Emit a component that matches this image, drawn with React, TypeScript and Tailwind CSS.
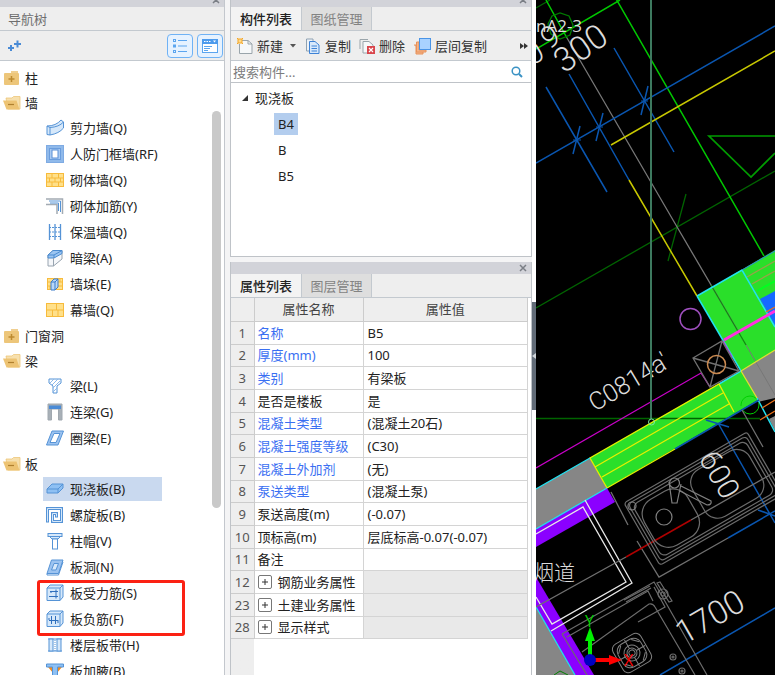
import type { ReactNode } from 'react';

type IconName =
  | 'shearWall' | 'frameWall' | 'brick' | 'brickBar' | 'insulation' | 'hiddenBeam' | 'pier' | 'curtain'
  | 'beam' | 'linkBeam' | 'ringBeam' | 'slab' | 'spiral' | 'cap' | 'hole' | 'forceBar' | 'negBar' | 'strip' | 'haunch';

interface TreeItem {
  icon: IconName;
  label: string;
  active?: boolean;
}

interface TreeGroup {
  label: string;
  open: boolean;
  items: TreeItem[];
}

const slabItems: TreeItem[] = [
  { icon: 'slab', label: '现浇板(B)', active: true },
  { icon: 'spiral', label: '螺旋板(B)' },
  { icon: 'cap', label: '柱帽(V)' },
  { icon: 'hole', label: '板洞(N)' },
];

const slabBars: TreeItem[] = [
  { icon: 'forceBar', label: '板受力筋(S)' },
  { icon: 'negBar', label: '板负筋(F)' },
];

const slabRest: TreeItem[] = [
  { icon: 'strip', label: '楼层板带(H)' },
  { icon: 'haunch', label: '板加腋(B)' },
];

const groups: TreeGroup[] = [
  { label: '柱', open: false, items: [] },
  {
    label: '墙',
    open: true,
    items: [
      { icon: 'shearWall', label: '剪力墙(Q)' },
      { icon: 'frameWall', label: '人防门框墙(RF)' },
      { icon: 'brick', label: '砌体墙(Q)' },
      { icon: 'brickBar', label: '砌体加筋(Y)' },
      { icon: 'insulation', label: '保温墙(Q)' },
      { icon: 'hiddenBeam', label: '暗梁(A)' },
      { icon: 'pier', label: '墙垛(E)' },
      { icon: 'curtain', label: '幕墙(Q)' },
    ],
  },
  { label: '门窗洞', open: false, items: [] },
  {
    label: '梁',
    open: true,
    items: [
      { icon: 'beam', label: '梁(L)' },
      { icon: 'linkBeam', label: '连梁(G)' },
      { icon: 'ringBeam', label: '圈梁(E)' },
    ],
  },
  { label: '板', open: true, items: slabItems },
];

const properties = [
  { no: 1, name: '名称', value: 'B5', link: true },
  { no: 2, name: '厚度(mm)', value: '100', link: true },
  { no: 3, name: '类别', value: '有梁板', link: true },
  { no: 4, name: '是否是楼板', value: '是' },
  { no: 5, name: '混凝土类型', value: '(混凝土20石)', link: true },
  { no: 6, name: '混凝土强度等级', value: '(C30)', link: true },
  { no: 7, name: '混凝土外加剂', value: '(无)', link: true },
  { no: 8, name: '泵送类型', value: '(混凝土泵)', link: true },
  { no: 9, name: '泵送高度(m)', value: '(-0.07)' },
  { no: 10, name: '顶标高(m)', value: '层底标高-0.07(-0.07)' },
  { no: 11, name: '备注', value: '' },
  { no: 12, name: '钢筋业务属性', value: '', group: true },
  { no: 23, name: '土建业务属性', value: '', group: true },
  { no: 28, name: '显示样式', value: '', group: true },
];

const B = '#5593d6';
const L = '#d6e8fa';
const Y = '#f7bb3c';
const YL = '#ffe08a';

const iconShapes: Record<IconName, ReactNode> = {
  shearWall: (
    <>
      <path d="M1 7 Q10 7 15 1 L17.500 3 V9 Q13 14.500 4 16 L1 15.500 Z" fill={L} stroke={B} />
      <path d="M1 7 L4 8.500 Q13 8 17.500 3 M4 8.500 V16" fill="none" stroke={B} />
    </>
  ),
  frameWall: (
    <>
      <rect x="0.500" y="0.500" width="17" height="17" fill="#8fb9ea" stroke="#7fabe3" />
      <rect x="3.500" y="3.500" width="11" height="11" fill="#a9caf2" stroke="#6a9ddd" />
      <rect x="6" y="5" width="6" height="8" fill="#fff" stroke="#5a8fd6" />
    </>
  ),
  brick: (
    <>
      <rect x="0.500" y="2.500" width="17" height="13" fill={YL} stroke={Y} />
      <path d="M0 7 H18 M0 11 H18 M6 2 V7 M12.500 2 V7 M3.500 7 V11 M9 7 V11 M14.500 7 V11 M6 11 V16 M12.500 11 V16" stroke={Y} fill="none" />
    </>
  ),
  brickBar: (
    <>
      <path d="M0 2 H16.500 V17" fill="none" stroke="#a3abb3" strokeWidth="1.5" />
      <path d="M0 7.500 H11 V17" fill="none" stroke="#a3abb3" strokeWidth="1.5" />
      <path d="M3 4 H14.500 V15 M4 6 H12.500 V14" fill="none" stroke={B} strokeWidth="1" />
    </>
  ),
  insulation: (
    <>
      <path d="M3.500 1 V17 M9 1 V17 M14.500 1 V17" stroke={B} strokeWidth="1.300" />
      <path d="M3 4.500 H15 M3 9 H15 M3 13.500 H15" stroke={B} strokeWidth="1" strokeDasharray="2 1" />
    </>
  ),
  hiddenBeam: (
    <>
      <path d="M2 6 L7 1.500 H16 V10 L7.500 17 H2 Z" fill="#f5f7fa" stroke="#98a4b0" />
      <path d="M2 6 L7 1.500 H16 V4.500 L8 9 H2 Z" fill="#9cc5f1" stroke="#4a8bd0" />
      <path d="M2 6 H8 L16 1.500 M8 9 V6" stroke="#4a8bd0" fill="none" />
      <path d="M7.500 9 V17" stroke="#98a4b0" />
    </>
  ),
  pier: (
    <>
      <rect x="1.500" y="3.500" width="15" height="11" fill={YL} stroke={Y} />
      <path d="M1 7 H17 M1 11 H17 M14 3 V7 M4 11 V15" stroke={Y} />
      <path d="M5 7 L8 4 H12 V12 L9 15 H5 Z" fill="#b9d8f8" stroke="#3d7cc9" />
      <path d="M5 7 H9 V15 M9 7 L12 4" fill="none" stroke="#3d7cc9" />
    </>
  ),
  curtain: (
    <>
      <rect x="0.500" y="2.500" width="17" height="13" fill={YL} stroke={Y} />
      <path d="M0 9 H18 M10.500 2 V9 M6.500 9 V16 M12 9 V16" stroke={Y} fill="none" />
    </>
  ),
  beam: (
    <>
      <path d="M3 2 H15 V6 L11 9 V16 H7 V9 L3 6 Z" fill="#fff" stroke={B} />
      <path d="M4 6 L8 2 M6 8 L12 2 M7 11 L14 4 M7 15 L11 11" stroke="#8db9ea" />
    </>
  ),
  linkBeam: (
    <>
      <path d="M2 1 H16 V17 H12.500 V6 H5.500 V17 H2 Z" fill="#a8b0b7" stroke="#a0a8af" />
      <rect x="3" y="2.500" width="12" height="3.500" fill="#4a8bd6" />
    </>
  ),
  ringBeam: (
    <>
      <path d="M6 2 H17.500 L12 16 H0.500 Z" fill="#9cc3f0" stroke={B} />
      <path d="M8 4.500 H14 L10 13.500 H4 Z" fill="#fff" stroke={B} />
    </>
  ),
  slab: (
    <>
      <path d="M1 9 L6 4 H17 V8 L12 13 H1 Z" fill="#8ec0f3" stroke={B} />
      <path d="M1 9 H12 V13 M12 9 L17 4" fill="none" stroke={B} />
    </>
  ),
  spiral: (
    <>
      <path d="M1.500 16.500 V2.500 H15.500 V15.500 H6.500 V7.500 H10.500 V11.500" fill="none" stroke={B} strokeWidth="3" />
      <path d="M1.500 15.500 V2.500 H15.500 V15.500 H6.500 V7.500 H10.500 V10.500" fill="none" stroke={L} strokeWidth="1" />
    </>
  ),
  cap: (
    <>
      <rect x="2" y="1.500" width="14" height="3" fill={L} stroke={B} />
      <path d="M3.500 4.500 H14.500 L12 7 H6 Z" fill={L} stroke={B} />
      <rect x="6.500" y="7" width="5" height="10" fill="#fff" stroke={B} />
    </>
  ),
  hole: (
    <>
      <path d="M5.500 2 H17 L12.500 15.500 H1 Z" fill="#9cc3f0" stroke={B} />
      <path d="M1 15.500 V17 H12.500 L17 4" fill="none" stroke={B} />
      <path d="M8 5.500 H12.500 L10 12 H5.500 Z" fill="#d6e8fa" stroke={B} />
    </>
  ),
  forceBar: (
    <>
      <path d="M1 4 L4 1 H17 V13 L14 16.500 H1 Z" fill={L} stroke={B} />
      <path d="M1 4 H14 V16.500 M14 4 L17 1" fill="none" stroke={B} />
      <path d="M4 7.500 H12 M3 12.500 H12 M5 7 V9 M10 5.500 V14.500" stroke="#2f6fbd" fill="none" />
    </>
  ),
  negBar: (
    <>
      <path d="M1 4 L4 1 H17 V13 L14 16.500 H1 Z" fill={L} stroke={B} />
      <path d="M1 4 H14 V16.500 M14 4 L17 1" fill="none" stroke={B} />
      <path d="M3 10.500 H12.500 M5.500 6 V14 M9.500 6 V14 M3 8 V10 M12 11 V13" stroke="#2f6fbd" fill="none" />
    </>
  ),
  strip: (
    <>
      <path d="M2 3 H16 M2 15 H16" stroke={B} />
      <rect x="3" y="3" width="4" height="12" fill={L} stroke={B} />
      <rect x="11" y="3" width="4" height="12" fill={L} stroke={B} />
      <path d="M9 4 V15" stroke={B} strokeDasharray="1 1" />
    </>
  ),
  haunch: (
    <>
      <path d="M2 5 L7 11 V5 Z M16 5 L11 11 V5 Z" fill="#f28a1c" />
      <path d="M0.500 2 H17.500 V5 H11.500 V17 H6.500 V5 H0.500 Z" fill="#8ec0f3" stroke={B} />
    </>
  ),
};

function CloseButton() {
  return (
    <button type="button" aria-label="关闭" className="flex h-2 w-2 items-center justify-center">
      <svg className="h-2 w-2" viewBox="0 0 8 8" fill="none" stroke="#7b7f86" strokeWidth="1.5">
        <path d="M1 1 L7 7 M7 1 L1 7" />
      </svg>
    </button>
  );
}

function FolderIcon({ open }: { open: boolean }) {
  return (
    <svg className="h-[18px] w-[18px] shrink-0" viewBox="0 0 18 18">
      {open ? (
        <>
          <path d="M3 4 H9 L10.500 2.500 H17 V15 H5 Z" fill="#f7e0ae" stroke="#edc67a" strokeWidth="0.800" />
          <path d="M0 6.500 H13.500 L16.500 15.500 H3.500 Z" fill="#edc373" />
          <path d="M5 10.500 H11" stroke="#b0802f" strokeWidth="1.200" />
        </>
      ) : (
        <>
          <path d="M8 2 H15 V4 H8 Z" fill="#f0cf90" />
          <rect x="1" y="4" width="15" height="12" rx="1" fill="#edc67a" />
          <path d="M5.500 10 H11.500 M8.500 7 V13" stroke="#bd8a30" strokeWidth="1.500" />
        </>
      )}
    </svg>
  );
}

function TreeRow({ item }: { item: TreeItem }) {
  return (
    <div className="flex h-[26px] items-center pl-[43px]">
      <button
        type="button"
        className={`flex h-6 w-[119px] items-center gap-1.5 whitespace-nowrap pl-[3px] ${item.active ? 'bg-[#c9d9ef]' : ''}`}
      >
        <svg className="h-[18px] w-[18px] shrink-0" viewBox="0 0 18 18">
          {iconShapes[item.icon]}
        </svg>
        <span>{item.label}</span>
      </button>
    </div>
  );
}

function NavigationPanel() {
  return (
    <aside className="flex w-[225px] shrink-0 flex-col border-r border-[#c3c7cd] bg-white">
      <div className="flex h-[7px] shrink-0 items-start justify-end bg-[#d2d3d9] pr-1">
        <div className="-mt-1">
          <CloseButton />
        </div>
      </div>
      <h2 className="flex h-6 shrink-0 items-center border-b border-[#c3c9cf] bg-[#eeeeee] pl-2 text-[#6e6e6e]">导航树</h2>
      <div className="flex h-[30px] shrink-0 items-center gap-1 border-b border-[#c3c9cf] bg-[#eeeeee] pl-2 pr-px">
        <button type="button" aria-label="添加" className="mr-auto">
          <svg className="h-3.5 w-3.5" viewBox="0 0 14 14" stroke="#4a8bd6" strokeWidth="2">
            <path d="M0 9 H6 M3 6 V12 M6 5 H13 M9.500 1.500 V8.500" />
          </svg>
        </button>
        <button type="button" aria-label="列表视图" className="flex h-6 w-[26px] items-center justify-center rounded border border-[#6fb2f5] bg-[#e6f2ff]">
          <svg className="h-4 w-4" viewBox="0 0 16 16" fill="none" stroke="#5ba5ef">
            <path d="M6 2.500 H15 M6 8 H15 M6 13.500 H15" />
            <rect x="1.500" y="1.500" width="2" height="2" />
            <rect x="1.500" y="7" width="2" height="2" />
            <rect x="1.500" y="12.500" width="2" height="2" />
          </svg>
        </button>
        <button type="button" aria-label="窗口视图" className="flex h-6 w-[26px] items-center justify-center rounded border border-[#6fb2f5] bg-[#e6f2ff]">
          <svg className="h-4 w-4" viewBox="0 0 16 16">
            <rect x="0.500" y="1.500" width="15" height="13" fill="#fff" stroke="#5ba5ef" />
            <rect x="0" y="1" width="16" height="5" fill="#4d9bed" />
            <path d="M2 3.500 H3.500 M4.500 3.500 H6 M7 3.500 H8.500" stroke="#fff" />
            <path d="M11 2.500 H14 L12.500 4.500 Z" fill="#fff" />
            <path d="M2 8.500 H10 M2 10.500 H8 M2 12.500 H6" stroke="#5ba5ef" />
          </svg>
        </button>
      </div>
      <nav className="relative min-h-0 flex-1 overflow-hidden pt-1">
        {groups.map((group) => (
          <div key={group.label}>
            <button type="button" className="flex h-[25px] items-center gap-1 pl-[3px]">
              <FolderIcon open={group.open} />
              <span>{group.label}</span>
            </button>
            {group.items.map((item) => (
              <TreeRow key={item.label} item={item} />
            ))}
          </div>
        ))}
        {/* Rebar entries, framed in red */}
        <div className="relative">
          {slabBars.map((item) => (
            <TreeRow key={item.label} item={item} />
          ))}
          <div className="pointer-events-none absolute -bottom-1 left-[37px] top-0 w-[148px] rounded-[3px] border-[3px] border-[#fb2113]" />
        </div>
        {slabRest.map((item) => (
          <TreeRow key={item.label} item={item} />
        ))}
        <div className="absolute right-[3px] top-[50px] h-[397px] w-[9px] rounded-full bg-[#c9c9c9]" />
      </nav>
    </aside>
  );
}

function TabBar({ active, other }: { active: string; other: string }) {
  return (
    <div role="tablist" className="flex h-6 shrink-0 border-b border-[#c3c9cf] bg-[#eeeeee]">
      <button type="button" role="tab" aria-selected="true" className="w-[70px] bg-[#f3f3f3] font-medium text-[#222222]">
        {active}
      </button>
      <button type="button" role="tab" aria-selected="false" className="w-[71px] border-x border-[#c3c9cf] bg-[#dedede] text-[#838383]">
        {other}
      </button>
    </div>
  );
}

function ComponentPanel() {
  return (
    <section className="flex h-[257px] shrink-0 flex-col border-x border-b border-[#bfc3c8] bg-white">
      <div className="flex h-[7px] shrink-0 items-start justify-end bg-[#d2d3d9] pr-1">
        <div className="-mt-1">
          <CloseButton />
        </div>
      </div>
      <TabBar active="构件列表" other="图纸管理" />
      <div className="flex h-[30px] shrink-0 items-center whitespace-nowrap border-b border-[#c3c9cf] bg-[#eeeeee] pl-1.5 pr-[3px] text-[#333333]">
        <button type="button" className="flex items-center gap-1">
          <svg className="h-4 w-4" viewBox="0 0 16 16">
            <path d="M4.500 2.500 H11 L15 6 V15.500 H2.500 V6" fill="#f6f8f9" stroke="#9aa5ab" />
            <path d="M11 2.500 V6 H15" fill="none" stroke="#9aa5ab" />
            <rect x="1" y="1" width="4" height="4" fill="#ffd98a" stroke="#f5a623" />
            <path d="M0 0 L1 1 M6 0 L5 1 M0 6 L1 5 M6 6 L5 5" stroke="#f5a623" />
          </svg>
          新建
          <svg className="ml-0.5 h-1.5 w-2" viewBox="0 0 8 6">
            <path d="M1 1 H7 L4 4.500 Z" fill="#555" />
          </svg>
        </button>
        <button type="button" className="ml-2 flex items-center gap-1">
          <svg className="h-4 w-4" viewBox="0 0 16 16">
            <path d="M1.500 1 H8 V13 H1.500 Z" fill="#eef3f8" stroke="#8fa2b3" />
            <path d="M4.500 3.500 H10 L14 7 V15.500 H4.500 Z" fill="#d8e9fb" stroke="#3f83d6" />
            <path d="M6.500 8 H12 M6.500 10.500 H12 M6.500 13 H12" stroke="#3f83d6" />
          </svg>
          复制
        </button>
        <button type="button" className="ml-2 flex items-center gap-1">
          <svg className="h-4 w-4" viewBox="0 0 16 16">
            <path d="M1 11 V1.500 H9" fill="none" stroke="#9aa5ab" />
            <path d="M4 3.500 H10 L14 7 V15 H4 Z" fill="#f6f8f9" stroke="#9aa5ab" />
            <rect x="8" y="8" width="8" height="8" fill="#d9454b" />
            <path d="M10 10 L14 14 M14 10 L10 14" stroke="#fff" strokeWidth="1.200" />
          </svg>
          删除
        </button>
        <button type="button" className="ml-2 flex items-center gap-1">
          <svg className="h-[18px] w-[18px]" viewBox="0 0 18 18">
            <path d="M1 8 H3 V17 H10 V15" fill="#f3b48a" stroke="#e8925a" />
            <path d="M3.500 5 H6 V13 H13 V15 H3.500 Z" fill="#f3b48a" stroke="#e8925a" />
            <rect x="6.500" y="1.500" width="11" height="11" fill="#a9d2ff" stroke="#4a94e6" />
          </svg>
          层间复制
        </button>
        <button type="button" aria-label="更多" className="ml-auto">
          <svg className="h-2 w-2" viewBox="0 0 8 8" fill="#333">
            <path d="M0 1 L4 4 L0 7 Z M4 1 L8 4 L4 7 Z" />
          </svg>
        </button>
      </div>
      <div className="flex h-[22px] shrink-0 items-center border-b border-[#bfc3c8] pl-0.5 pr-2">
        <input
          type="text"
          aria-label="搜索构件"
          placeholder="搜索构件..."
          className="min-w-0 flex-1 bg-transparent outline-none placeholder:text-[#7c7c7c]"
        />
        <svg className="h-3 w-3" viewBox="0 0 12 12" fill="none" stroke="#3a92c4">
          <circle cx="5" cy="5" r="3.800" strokeWidth="1.500" />
          <path d="M8 8 L11 11" strokeWidth="2" />
        </svg>
      </div>
      <ul className="pl-2.5 pt-0.5">
        <li>
          <div className="flex h-[26px] items-center gap-1.5">
            <svg className="h-2 w-2" viewBox="0 0 8 8">
              <path d="M7 1 V7 H1 Z" fill="#333" />
            </svg>
            现浇板
          </div>
          <ul className="pl-[33px]">
            <li className="flex h-[26px] items-center">
              <span className="bg-[#b3cdee] px-1 py-px">B4</span>
            </li>
            <li className="flex h-[26px] items-center px-1">B</li>
            <li className="flex h-[26px] items-center px-1">B5</li>
          </ul>
        </li>
      </ul>
    </section>
  );
}

function PropertyPanel() {
  return (
    <section className="flex min-h-0 flex-1 flex-col border-x border-[#bfc3c8] bg-white">
      <div className="flex h-3 shrink-0 items-center justify-end bg-[#d2d3d9] pr-1">
        <CloseButton />
      </div>
      <TabBar active="属性列表" other="图层管理" />
      <div className="min-h-0 flex-1 bg-linear-to-r from-[#eeeeee] from-[23px] to-white to-[23px]">
        <table className="w-[297px] table-fixed border-collapse text-left">
          <thead>
            <tr className="h-[23px] bg-[#eeeeee] text-[#444444]">
              <th className="w-[23px] border-b border-r border-[#cccccc]" />
              <th className="w-[109px] border-b border-r border-[#cccccc] text-center font-normal">属性名称</th>
              <th className="border-b border-r border-[#cccccc] text-center font-normal">属性值</th>
            </tr>
          </thead>
          <tbody>
            {properties.map((row) => (
              <tr key={row.no} className="h-[23px] nth-[3n+2]:h-[22px]">
                <td className="border-b border-r border-[#cccccc] bg-[#eeeeee] text-center text-[#555555]">{row.no}</td>
                <td className={`whitespace-nowrap border-b border-r border-[#d4d4d4] bg-white pl-[3px] ${row.link ? 'text-[#3a6ff2]' : ''}`}>
                  {row.group ? (
                    <span className="flex items-center gap-1.5">
                      <button type="button" aria-label="展开" className="flex h-3.5 w-3.5 items-center justify-center rounded-[2px] border border-[#777777]">
                        <svg className="h-1.5 w-1.5" viewBox="0 0 6 6" stroke="#333">
                          <path d="M0 3 H6 M3 0 V6" />
                        </svg>
                      </button>
                      {row.name}
                    </span>
                  ) : (
                    row.name
                  )}
                </td>
                <td className={`whitespace-nowrap border-b border-r border-[#d4d4d4] pl-1 ${row.group ? 'bg-[#e9e9e9]' : 'bg-white'}`}>{row.value}</td>
              </tr>
            ))}
          </tbody>
        </table>
      </div>
    </section>
  );
}

function DrawingCanvas() {
  return (
    <main className="min-w-0 flex-1 bg-black">
      <svg className="h-full w-full" viewBox="536 0 239 675" preserveAspectRatio="xMinYMin slice" fill="none">
        {/* Solid wall and window fills */}
        <path d="M697 296 L775 250 V350 L741 371 Z" fill="#2adf2a" />
        <path d="M760 299 L775 291 V326 Z" fill="#1668ff" />
        <path d="M741 371 L775 350 V398 L758 402 Z" fill="#868686" />
        <path d="M590 458 L741 371 L758 400 L607 488 Z" fill="#2adf2a" />
        <path d="M536 489 L590 458 L607 488 L536 529 Z" fill="#868686" />
        <path d="M536 529 L607 488 L615 502 L536 547 Z" fill="#8b00ff" />
        <path d="M536 577 L594 675 H575 L536 607 Z" fill="#8b00ff" />
        <path d="M536 607 L575 675 H536 Z" fill="#868686" />
        <path d="M769 419 L775 416 V431 Z" fill="#868686" />

        {/* Axis grid */}
        <path d="M536 308 L775 171 M686 194 L668 261 M536 418.500 H760 M536 8 L550 0" stroke="#006400" strokeWidth="1.300" />
        <path d="M615 -3 L764 256 M536 49 L620 0 M546 0 L567 38" stroke="#00c800" strokeWidth="1.500" />
        <path d="M548 24 L552 16 L560 13 L569 16 L573 25 L570 35 L560 39 L551 34 Z" stroke="#007a00" strokeWidth="1.300" />
        <path d="M775 136 H709 L751 177 L775 153" stroke="#009c00" strokeWidth="1.700" />
        <path d="M567 38 L673 220 L738 331" stroke="#777" strokeWidth="1.300" />
        <path d="M711 285 L746 345" stroke="#128a12" strokeWidth="1.300" />
        <path d="M746 345 L775 395" stroke="#777" />
        <path d="M536 163 L775 26 M546 87 L607 192 M569 74 L629 180 M614 48 L674 152" stroke="#0a56b0" strokeWidth="1.500" />
        <path d="M580 126 L573 154 M603 113 L596 141 M648 86 L641 115" stroke="#0a56b0" strokeWidth="1.500" />
        <path d="M573 140 H581 M596 127 H603 M641 101 H648" stroke="#0a56b0" />
        <path d="M611 145 L775 51 M629 180 L697 296" stroke="#c8c800" strokeWidth="1.500" />

        {/* Wall edges */}
        <path d="M697 296 L742 270 L775 327 M697 296 L741 371 L719 384 M757 398 L775 432" stroke="#22e0f0" strokeWidth="1.500" />
        <path d="M742 270 L775 251" stroke="#2b7de0" />
        <path d="M747 277 L775 261 M752 284 L775 271" stroke="#9aa04a" strokeWidth="1.300" />
        <path d="M757 291 L775 281" stroke="#00ff20" strokeWidth="2" />
        <path d="M766 312 L775 307 M762 408 L775 400 M760 420 L775 411" stroke="#e8701a" strokeWidth="1.300" />
        <path d="M724 340 L775 311" stroke="#ff30e0" strokeWidth="3" />
        <path d="M723 341 L732 357" stroke="#b040e0" strokeWidth="1.500" />
        <path d="M741 371 L775 350 M741 371 L757 398" stroke="#e0e030" strokeWidth="1.300" />
        <path d="M607 488 L590 458 L719 384 L734 412 M595 467 L723 393 M602 477 L729 404 M607 488 L675 449" stroke="#e6f000" strokeWidth="1.300" />
        <path d="M675 449 L759 400 M706 420 L729 427 M718 423 L775 523 M758 510 L775 516 M728 538 L775 511 M660 675 L775 608" stroke="#0a56b0" strokeWidth="1.500" />
        <circle cx="750" cy="405" r="9" stroke="#00d000" strokeDasharray="22 5" />
        <path d="M536 468 L701 373 L710 387" stroke="#c800c8" strokeWidth="1.300" />
        <path d="M536 489 L590 458 M536 529 L607 488 M536 607 L575 675" stroke="#22e0f0" strokeWidth="1.300" />
        <circle cx="690.500" cy="319" r="10.500" stroke="#a050c0" strokeWidth="1.500" />
        <path d="M693 358 L722 341 L739 371 L710 387 Z M693 358 L739 371 M722 341 L710 387" stroke="#707070" strokeWidth="1.300" />
        <circle cx="716.500" cy="364.500" r="9" stroke="#c88850" strokeWidth="1.500" />

        {/* Flue shaft */}
        <path d="M536 534 L583 507 L626 582 L552 624 L536 597 M585 500 L632 583 L551 631" stroke="#e8e8e8" strokeWidth="1.300" />
        <path d="M536 607 L626 557 M691 520 L775 472 M611 492 L628 525 M637 541 L659 577 L728 538 M742 410 L763 447" stroke="#707070" strokeWidth="1.300" />
        <path d="M626 557 L691 520" stroke="#b00000" strokeWidth="1.500" />

        {/* Double sink with tap */}
        <g transform="translate(624 503) rotate(-30)" stroke="#6c6c6c" strokeWidth="1.200">
          <rect width="142" height="72" rx="3" />
          <rect x="3" y="3" width="136" height="66" rx="4" />
          <rect x="6" y="6" width="130" height="60" rx="6" />
          <rect x="8" y="10" width="50" height="53" rx="17" />
          <rect x="66" y="8" width="66" height="54" rx="15" />
        </g>
        <g stroke="#808080" strokeWidth="1.200">
          <circle cx="664" cy="517" r="8" />
          <circle cx="632" cy="506" r="4" />
          <circle cx="674.500" cy="483" r="5" />
          <path d="M669 482 L672 503 H677 L681 484 M681 486 L711 501 Q712 505 707 505 L680 491" />
        </g>

        {/* Stove */}
        <g stroke="#6c6c6c" strokeWidth="1.200">
          <path d="M562 634 L654 582 L707 675 M562 634 L587 675 M567 637 L648 591 L653 601 M582 652 L649 604 Q653 603 655 607 L695 675" />
          <path d="M624 600 L650 586 M626 602 L651 588 M638 622 L665 607 L654 587 M660 582 L672 601 L669 602 L657 583 Z" />
          <circle cx="663" cy="594" r="5" />
          <circle cx="663" cy="594" r="2" />
          <circle cx="673" cy="657" r="3" />
          <circle cx="673" cy="657" r="1" />
          <circle cx="682" cy="671" r="3" />
          <circle cx="682" cy="671" r="1" />
        </g>
        <g transform="translate(632 653) rotate(-30)" stroke="#808080">
          <rect x="-16" y="-16" width="32" height="32" rx="6" />
          <rect x="-13" y="-13" width="26" height="26" rx="8" />
          <circle r="8" />
          <circle r="5" />
          <circle r="3" />
          <path d="M0 -15 V-5 M0 5 V15 M-15 0 H-5 M5 0 H15 M-12 -6 L-6 -12 M6 -12 L12 -6 M12 6 L6 12 M-6 12 L-12 6" />
        </g>

        {/* Annotations */}
        <g fill="#dcdcdc" fontFamily="Roboto, sans-serif" fontWeight="300">
          <text x="536" y="32" fontSize="17" fontFamily="'Open Sans', sans-serif" fontWeight="400">nA2-3</text>
          <text transform="translate(564 74) rotate(-35)" fontSize="34">300</text>
          <text transform="translate(532 66) rotate(-30)" fontSize="30">0</text>
          <text transform="translate(548 50) rotate(-30)" fontSize="30">9</text>
          <text transform="translate(595 412) rotate(-31)" fontSize="25">C0814a'</text>
          <text transform="translate(698 458) rotate(60)" fontSize="30">600</text>
          <text transform="translate(684 645) rotate(-30)" fontSize="33">1700</text>
          <text x="533" y="580" fontSize="21" fontFamily="'Noto Sans CJK SC', sans-serif">烟道</text>
        </g>

        {/* Crosshair */}
        <path d="M651 0 V419" stroke="#3d7a5f" strokeWidth="2" />
        <circle cx="651.500" cy="422" r="3" stroke="#7de8a0" />
        <path d="M554 675 L560 671 L568 675" stroke="#008000" />

        {/* UCS marker */}
        <path d="M590 656 V640" stroke="#00f000" strokeWidth="4" />
        <path d="M590 627 L595 641 H585 Z" fill="#00f000" />
        <path d="M594 660 H610" stroke="#ff0000" strokeWidth="4" />
        <path d="M622 660 L609 655 V665 Z" fill="#ff0000" />
        <circle cx="590" cy="660" r="6" fill="#0000c0" />
        <g fontFamily="'Open Sans', sans-serif" fontSize="16">
          <text x="585" y="627" fill="#00d000">Y</text>
          <text x="624" y="666" fill="#ff0000">X</text>
        </g>
      </svg>
    </main>
  );
}

export default function App() {
  return (
    <div className="flex h-screen overflow-hidden bg-[#f4f4f5] font-['Noto_Sans','Noto_Sans_CJK_SC',sans-serif] text-[13px] leading-5 text-[#222222]">
      <NavigationPanel />
      <div className="ml-[5px] flex w-[302px] shrink-0 flex-col gap-[5px]">
        <ComponentPanel />
        <PropertyPanel />
      </div>
      {/* Collapse handle */}
      <div className="flex w-1 shrink-0 items-center bg-white pt-9">
        <button type="button" aria-label="收起面板" className="flex h-[108px] w-1 items-center bg-[#626c78]">
          <svg className="h-1.5 w-1" viewBox="0 0 4 6">
            <path d="M4 0 V6 L0 3 Z" fill="#cfd4da" />
          </svg>
        </button>
      </div>
      <DrawingCanvas />
    </div>
  );
}
